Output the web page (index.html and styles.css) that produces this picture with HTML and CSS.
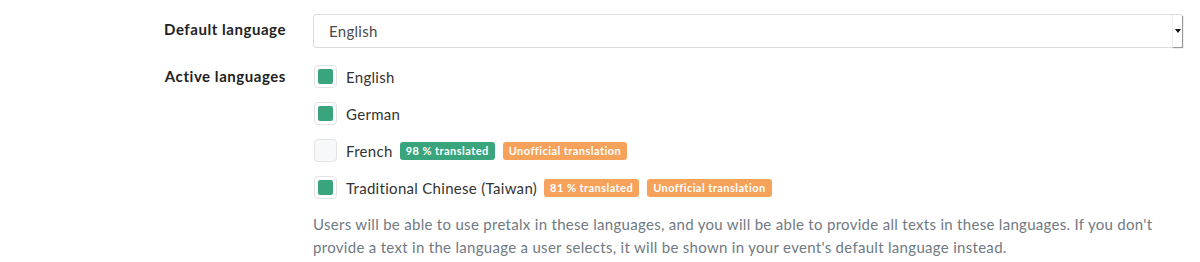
FILE: index.html
```html
<!DOCTYPE html>
<html lang="en">
<head>
<meta charset="utf-8">
<title>Languages</title>
<link rel="stylesheet" href="styles.css">
</head>
<body>
<div class="form">
  <div class="row row-select">
    <label class="label">Default language</label>
    <div class="field">
      <div class="select">
        <span>English</span>
        <span class="arrow"></span>
      </div>
    </div>
  </div>
  <div class="row">
    <div class="label label-top">Active languages</div>
    <div class="field">
      <div class="check"><span class="box on"></span><span class="name">English</span></div>
      <div class="check"><span class="box on"></span><span class="name">German</span></div>
      <div class="check"><span class="box"></span><span class="name">French</span><span class="badge green">98 % translated</span><span class="badge orange">Unofficial translation</span></div>
      <div class="check"><span class="box on"></span><span class="name">Traditional Chinese (Taiwan)</span><span class="badge orange">81 % translated</span><span class="badge orange">Unofficial translation</span></div>
      <p class="help">Users will be able to use pretalx in these languages, and you will be able to provide all texts in these languages. If you don't provide a text in the language a user selects, it will be shown in your event's default language instead.</p>
    </div>
  </div>
</div>
</body>
</html>
```
FILE: styles.css
```css
* { box-sizing: border-box; }
html, body { margin: 0; padding: 0; background: #fff; }
body {
  font-family: "Lato", "Noto Sans", sans-serif;
  font-size: 15px;
  letter-spacing: 0.3px;
  color: #333;
}
.form { padding: 14px 17px 0 0; }
.row {
  display: grid;
  grid-template-columns: 286px 1fr;
  column-gap: 27px;
}
.row-select { align-items: center; margin-bottom: 17px; }
.label {
  text-align: right;
  font-weight: 700;
  color: #222;
  font-size: 15px;
  letter-spacing: 0.55px;
}
.row-select .label { padding-bottom: 4px; }
.label-top { padding-top: 2px; }
.select {
  height: 34px;
  border: 1px solid #dcdcdc;
  border-radius: 3px;
  padding: 0 0 0 15px;
  display: flex;
  align-items: center;
  justify-content: space-between;
  color: #4a4a4a;
  position: relative;
}
.arrow {
  width: 10px;
  height: 32px;
  border-left: 1px solid #eee;
  box-shadow: 1px 1px 1px #999;
  position: relative;
}
.arrow::after {
  content: "";
  position: absolute;
  left: 2px;
  top: 14px;
  border-left: 3px solid transparent;
  border-right: 3px solid transparent;
  border-top: 4px solid #111;
}
.check {
  display: flex;
  align-items: center;
  height: 23px;
  margin-bottom: 14px;
}
.box {
  width: 23px;
  height: 23px;
  border: 1px solid #e3e3e3;
  border-radius: 4px;
  background: #f7f8fa;
  display: flex;
  align-items: center;
  justify-content: center;
  margin-left: 1px;
}
.box.on { background: #fff; }
.box.on::after {
  content: "";
  width: 15px;
  height: 15px;
  border-radius: 2px;
  background: #3aa57c;
}
.name { margin-left: 9px; color: #333; }
.badge {
  display: inline-block;
  font-size: 11px;
  font-weight: 700;
  letter-spacing: 0.45px;
  color: #fff;
  border-radius: 3px;
  padding: 2px 6px;
  line-height: 14px;
  margin-left: 7px;
}
.badge + .badge { margin-left: 8px; }
.green { background: #3aa57c; }
.orange { background: #f7a25b; }
.help {
  margin: 0;
  color: #707a83;
  line-height: 23px;
  padding-top: 0;
}
```
